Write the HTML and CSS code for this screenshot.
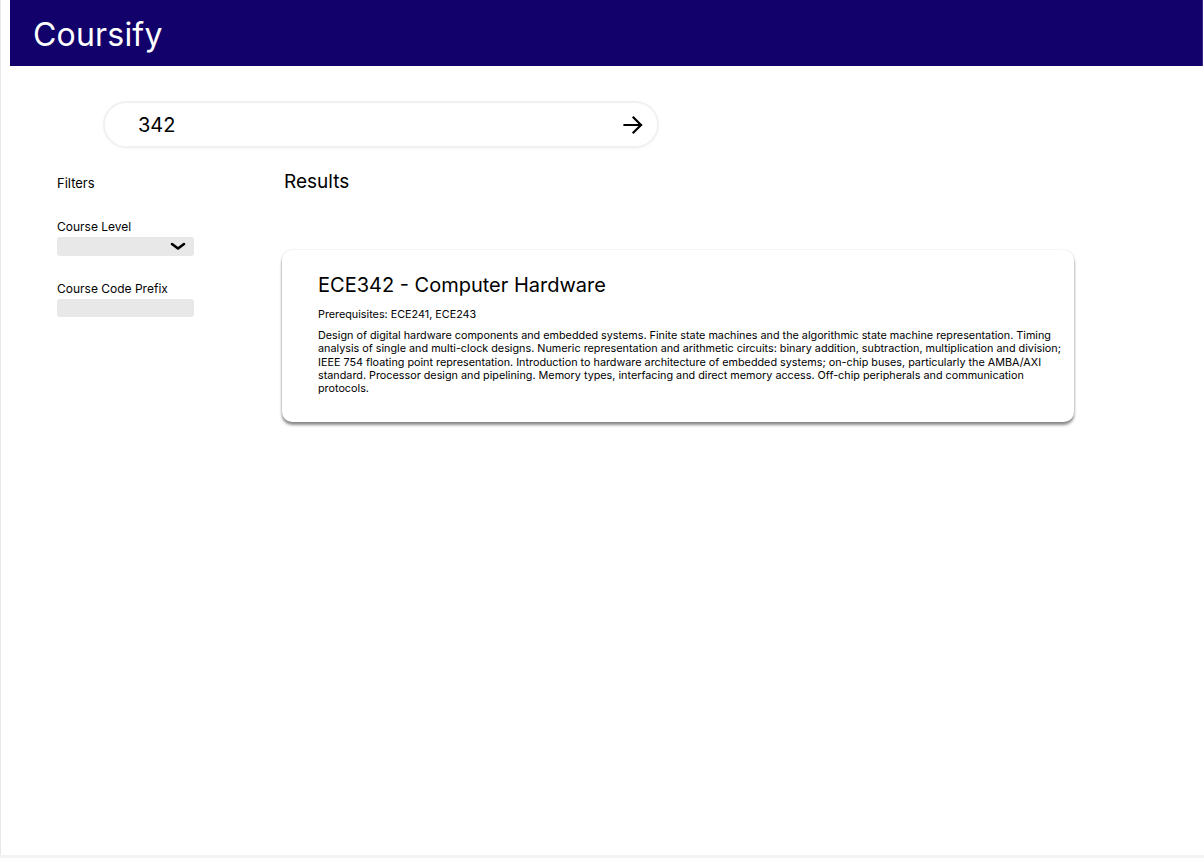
FILE: index.html
```html
<!DOCTYPE html>
<html lang="en">
<head>
<meta charset="utf-8">
<title>Coursify</title>
<link rel="stylesheet" href="styles.css">
</head>
<body>
<div class="frame">
  <header class="topbar">
    <h1 class="brand">Coursify</h1>
  </header>

  <div class="search">
    <span class="search-text">342</span>
    <svg class="search-go" width="20" height="20" viewBox="0 0 20 20" aria-hidden="true">
      <path d="M1.5 10 H18 M10.5 2.5 L18 10 L10.5 17.5" fill="none" stroke="#000" stroke-width="2.2" stroke-linecap="square" stroke-linejoin="miter"/>
    </svg>
  </div>

  <div class="main">
    <aside class="filters">
      <div class="filters-title">Filters</div>
      <div class="field">
        <div class="field-label">Course Level</div>
        <div class="select">
          <svg class="chev" width="16" height="9" viewBox="0 0 16 9" aria-hidden="true">
            <path d="M2 2 L8 6.5 L14 2" fill="none" stroke="#000" stroke-width="2.6" stroke-linecap="round" stroke-linejoin="round"/>
          </svg>
        </div>
      </div>
      <div class="field">
        <div class="field-label">Course Code Prefix</div>
        <div class="input"></div>
      </div>
    </aside>

    <section class="results">
      <h2 class="results-title">Results</h2>
      <article class="card">
        <h3 class="card-title">ECE342 - Computer Hardware</h3>
        <p class="prereq">Prerequisites: ECE241, ECE243</p>
        <p class="desc">Design of digital hardware components and embedded systems. Finite state machines and the algorithmic state machine representation. Timing analysis of single and multi-clock designs. Numeric representation and arithmetic circuits: binary addition, subtraction, multiplication and division; IEEE 754 floating point representation. Introduction to hardware architecture of embedded systems; on-chip buses, particularly the AMBA/AXI standard. Processor design and pipelining. Memory types, interfacing and direct memory access. Off-chip peripherals and communication protocols.</p>
      </article>
    </section>
  </div>
</div>
</body>
</html>
```

FILE: styles.css
```css
html, body {
  margin: 0;
  padding: 0;
  background: #f3f3f3;
}

body {
  font-family: Inter, "Liberation Sans", sans-serif;
  color: #000;
  width: 1204px;
  height: 858px;
  overflow: hidden;
}

.frame {
  box-sizing: border-box;
  width: 1204px;
  height: 855px;
  background: #fff;
  border-left: 1px solid #e8e8e8;
  padding-left: 9px;
}

.topbar {
  width: 1193px;
  height: 66px;
  background: #12006b;
  border-right: 1px solid #3a2a8a;
  box-sizing: border-box;
  display: flex;
  align-items: center;
  padding: 3px 0 0 23px;
}

.brand {
  margin: 0;
  font-weight: 400;
  font-size: 32px;
  line-height: 40px;
  color: #fff;
  letter-spacing: 0.2px;
}

.search {
  box-sizing: border-box;
  margin: 35px 0 0 93px;
  width: 556px;
  height: 47px;
  border: 2px solid #f1f1f1;
  border-radius: 24px;
  box-shadow: 0 1px 3px rgba(0,0,0,0.04);
  display: flex;
  align-items: center;
  justify-content: space-between;
  padding: 0 14px 0 33px;
}

.search-text {
  font-size: 20px;
  line-height: 24px;
}

.search-go {
  display: block;
}

.main {
  display: flex;
  padding-left: 47px;
  margin-top: 22px;
}

.filters {
  width: 137px;
  flex: none;
}

.filters-title {
  font-size: 13px;
  line-height: 16px;
  margin-top: 5px;
}

.field {
  margin-top: 28px;
}

.field + .field {
  margin-top: 25px;
}

.field-label {
  font-size: 12px;
  line-height: 15px;
}

.select, .input {
  margin-top: 3px;
  height: 19px;
  background: #e8e8e8;
  border-radius: 3px;
  position: relative;
}

.input {
  height: 18px;
}

.chev {
  position: absolute;
  right: 8px;
  top: 5px;
}

.results {
  margin-left: 88px;
  width: 793px;
}

.results-title {
  margin: 0 0 0 2px;
  font-weight: 400;
  font-size: 19px;
  line-height: 23px;
}

.card {
  box-sizing: border-box;
  margin-top: 57px;
  width: 792px;
  min-height: 172px;
  background: #fff;
  border-radius: 10px;
  box-shadow: 0 3px 3px rgba(0,0,0,0.45), 0 0 2px rgba(0,0,0,0.15);
  padding: 23px 8px 26px 36px;
}

.card-title {
  margin: 0;
  font-weight: 400;
  font-size: 20px;
  line-height: 24px;
}

.prereq {
  margin: 11px 0 0;
  font-size: 10.8px;
  line-height: 14px;
}

.desc {
  margin: 7px 0 0;
  font-size: 10.8px;
  line-height: 13.3px;
}
```
